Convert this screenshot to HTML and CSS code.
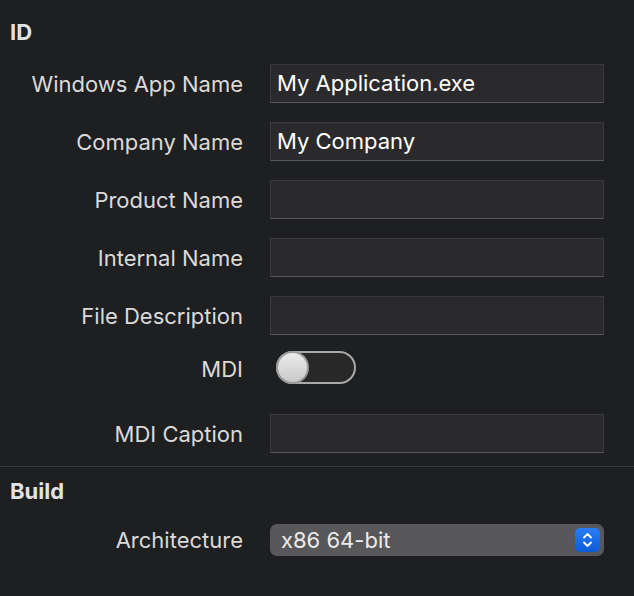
FILE: index.html
```html
<!DOCTYPE html>
<html>
<head>
<meta charset="utf-8">
<link rel="stylesheet" href="styles.css">
</head>
<body>
<section class="section section-id">
  <h2 class="section-title">ID</h2>
  <div class="rows">
    <div class="row"><label class="label">Windows App Name</label><div class="field">My Application.exe</div></div>
    <div class="row"><label class="label">Company Name</label><div class="field">My Company</div></div>
    <div class="row"><label class="label">Product Name</label><div class="field"></div></div>
    <div class="row"><label class="label">Internal Name</label><div class="field"></div></div>
    <div class="row"><label class="label">File Description</label><div class="field"></div></div>
    <div class="row row-toggle"><label class="label">MDI</label><div class="toggle"><div class="knob"></div></div></div>
    <div class="row"><label class="label">MDI Caption</label><div class="field"></div></div>
  </div>
</section>
<section class="section section-build">
  <h2 class="section-title">Build</h2>
  <div class="rows">
    <div class="row row-popup"><label class="label">Architecture</label>
      <div class="popup"><span class="popup-text">x86 64-bit</span>
        <span class="stepper"><svg width="25" height="24" viewBox="0 0 25 24"><path d="M9 9.5 L12.5 6 L16 9.5" fill="none" stroke="#fff" stroke-width="1.8" stroke-linecap="round" stroke-linejoin="round"/><path d="M9 14.5 L12.5 18 L16 14.5" fill="none" stroke="#fff" stroke-width="1.8" stroke-linecap="round" stroke-linejoin="round"/></svg></span>
      </div>
    </div>
  </div>
</section>
</body>
</html>
```

FILE: styles.css
```css
html, body {
  margin: 0;
  padding: 0;
  background: #1e1f21;
  width: 634px;
  height: 596px;
  overflow: hidden;
  font-family: Inter, "Liberation Sans", sans-serif;
}
.section-id {
  padding: 19px 0 13px 0;
  border-bottom: 1px solid #3a3a3c;
}
.section-build {
  padding: 11px 0 0 0;
}
.section-title {
  margin: 0 0 19px 10px;
  font-size: 22px;
  line-height: 26px;
  font-weight: 700;
  color: #e2e2e2;
}
.section-build .section-title {
  margin-bottom: 20px;
}
.rows {
  display: flex;
  flex-direction: column;
  gap: 19px;
}
.row {
  display: grid;
  grid-template-columns: 243px 334px;
  column-gap: 27px;
  align-items: center;
  height: 39px;
}
.row-toggle {
  height: 44px;
  margin-top: -3px;
  align-items: start;
}
.row-toggle .label {
  margin-top: 5px;
}
.row-popup {
  height: 32px;
}
.label {
  text-align: right;
  font-size: 22px;
  color: #dadada;
  white-space: nowrap;
}
.field {
  box-sizing: border-box;
  height: 39px;
  background: #2a2a2c;
  border: 1px solid #3b3b3d;
  border-bottom-color: #59595b;
  color: #ffffff;
  font-size: 22px;
  line-height: 36px;
  padding-left: 6px;
  white-space: nowrap;
}
.toggle {
  box-sizing: border-box;
  margin-left: 6px;
  width: 80px;
  height: 33px;
  border-radius: 17px;
  background: #282829;
  border: 2px solid #a9a9a9;
  position: relative;
}
.knob {
  position: absolute;
  left: -2px;
  top: -2px;
  box-sizing: border-box;
  width: 33px;
  height: 33px;
  border-radius: 50%;
  border: 2px solid #9a9a9a;
  background: linear-gradient(#ebebeb, #c9c9c9);
}
.popup {
  box-sizing: border-box;
  height: 32px;
  border-radius: 7px;
  background: #58585a;
  display: flex;
  align-items: center;
  justify-content: space-between;
  padding: 0 4px 0 11px;
}
.popup-text {
  color: #ececec;
  font-size: 22px;
}
.stepper {
  width: 25px;
  height: 24px;
  border-radius: 5px;
  background: linear-gradient(#2a7cf6, #0b5bd9);
  display: flex;
}
```
